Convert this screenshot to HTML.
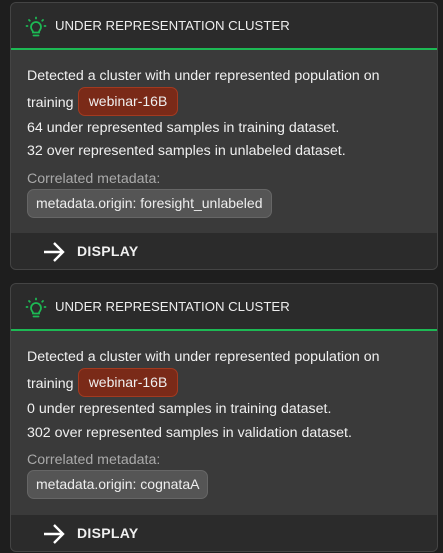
<!DOCTYPE html><html><head><style>
*{margin:0;padding:0;box-sizing:border-box}
body{width:443px;height:553px;background:#1e1e1e;font-family:"Liberation Sans",sans-serif;color:#f0f0f0;overflow:hidden;position:relative}
.card{position:absolute;left:10px;width:428px;height:268px;background:#3a3a3a;border:1px solid #444;border-radius:6px;overflow:hidden}
.hd{position:absolute;left:0;top:0;width:100%;height:47px;background:#2b2b2b;border-bottom:2px solid #1db954}
.hd span{position:absolute;left:44px;top:15px;font-size:13.2px;color:#eee}
.hd svg{position:absolute;left:13px;top:12px}
.t{position:absolute;left:16px;font-size:14.2px;white-space:nowrap}
.chip{position:absolute;left:67px;width:100px;height:29px;background:#7a2a18;border:1px solid #a33a20;border-radius:7px;font-size:14px;line-height:27px;text-align:center}
.meta{position:absolute;left:16px;height:29px;background:#555;border:1px solid #666;border-radius:7px;font-size:14px;line-height:27px;padding:0 8px;color:#eee}
.g{color:#aaa}
.ft{position:absolute;left:0;bottom:0;width:100%;height:36px;background:#2b2b2b}
.ft span{position:absolute;left:66px;top:10px;font-weight:bold;font-size:14px;letter-spacing:.3px}
.ft svg{position:absolute;left:32px;top:9px}
</style></head><body>
<div class="card" style="top:2px">
<div class="hd"><svg width="24" height="24" viewBox="0 0 24 24" fill="none" stroke="#1db954" stroke-width="1.8" stroke-linecap="round"><path d="M8 15a5 5 0 1 1 8 0c-.8.8-1 1.5-1 2.5h-6c0-1-.2-1.7-1-2.5z"/><path d="M9.5 20.5h5"/><path d="M12 2.5v1M5 5l.8.8M19 5l-.8.8M2.5 11h1M20.5 11h1"/></svg><span>UNDER REPRESENTATION CLUSTER</span></div>
<div class="t" style="top:65px">Detected a cluster with under represented population on</div>
<div class="t" style="top:92px">training</div><div class="chip" style="top:84px">webinar-16B</div>
<div class="t" style="top:117px">64 under represented samples in training dataset.</div>
<div class="t" style="top:140px">32 over represented samples in unlabeled dataset.</div>
<div class="t g" style="top:168px">Correlated metadata:</div>
<div class="meta" style="top:186px">metadata.origin: foresight_unlabeled</div>
<div class="ft"><svg width="22" height="20" viewBox="0 0 22 20" fill="none" stroke="#fff" stroke-width="2.4"><path d="M1 10h19M11 1l9 9-9 9"/></svg><span>DISPLAY</span></div>
</div>
<div class="card" style="top:283px;height:269px">
<div class="hd"><svg width="24" height="24" viewBox="0 0 24 24" fill="none" stroke="#1db954" stroke-width="1.8" stroke-linecap="round"><path d="M8 15a5 5 0 1 1 8 0c-.8.8-1 1.5-1 2.5h-6c0-1-.2-1.7-1-2.5z"/><path d="M9.5 20.5h5"/><path d="M12 2.5v1M5 5l.8.8M19 5l-.8.8M2.5 11h1M20.5 11h1"/></svg><span>UNDER REPRESENTATION CLUSTER</span></div>
<div class="t" style="top:65px">Detected a cluster with under represented population on</div>
<div class="t" style="top:92px">training</div><div class="chip" style="top:84px">webinar-16B</div>
<div class="t" style="top:117px">0 under represented samples in training dataset.</div>
<div class="t" style="top:141px">302 over represented samples in validation dataset.</div>
<div class="t g" style="top:168px">Correlated metadata:</div>
<div class="meta" style="top:186px">metadata.origin: cognataA</div>
<div class="ft"><svg width="22" height="20" viewBox="0 0 22 20" fill="none" stroke="#fff" stroke-width="2.4"><path d="M1 10h19M11 1l9 9-9 9"/></svg><span>DISPLAY</span></div>
</div>
</body></html>
